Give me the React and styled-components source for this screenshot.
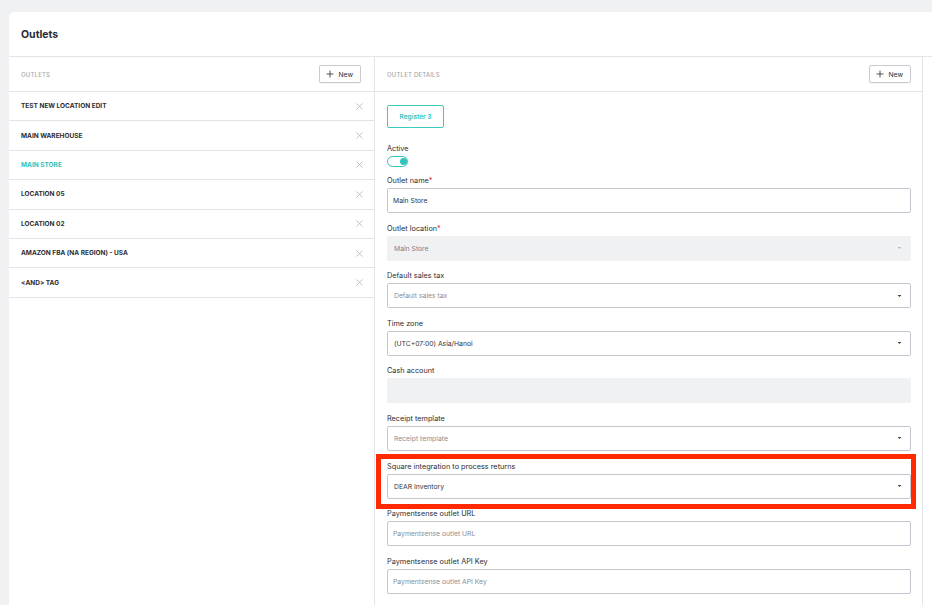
import React from "react";
import styled, { createGlobalStyle } from "styled-components";

const Global = createGlobalStyle`
  html, body { margin: 0; padding: 0; background: #f0f1f3; overflow: hidden; }
  body { font-family: "Inter", "Roboto", "Liberation Sans", sans-serif; color: #2b2d33; }
  * { box-sizing: border-box; }
`;

const Page = styled.div`
  padding: 12px 0 0 9px;
  width: 932px;
  height: 605px;
`;

const Card = styled.div`
  background: #fff;
  border-radius: 5px 0 0 0;
  width: 940px;
  height: 620px;
  display: flex;
  flex-direction: column;
`;

const CardHeader = styled.div`
  height: 45px;
  border-bottom: 1px solid #e3e4e8;
  display: flex;
  align-items: center;
  padding-left: 12px;
  font-size: 10.5px;
  font-weight: 700;
  color: #2b2d33;
`;

const Columns = styled.div`
  display: flex;
  flex: 1;
`;

const Column = styled.div`
  width: ${(p) => p.$w}px;
  border-right: 1px solid #e3e4e8;
  display: flex;
  flex-direction: column;
  position: relative;
`;

const ColHeader = styled.div`
  height: 35px;
  flex-shrink: 0;
  border-bottom: 1px solid #e3e4e8;
  display: flex;
  align-items: center;
  justify-content: space-between;
  padding: 0 ${(p) => p.$pr}px 0 12px;
`;

const ColTitle = styled.span`
  font-size: 6px;
  letter-spacing: 0.2px;
  text-transform: uppercase;
  color: #a5a8b0;
  font-weight: 500;
`;

const NewButton = styled.button`
  height: 18px;
  padding: 0 7px 0 6px;
  border: 1px solid #c9cbd2;
  border-radius: 2px;
  background: #fff;
  font-family: inherit;
  font-size: 6.8px;
  font-weight: 400;
  color: #2b2d33;
  display: flex;
  align-items: center;
  gap: 4px;
  box-shadow: 0 1px 0 rgba(0,0,0,0.04);
  svg { display: block; }
`;

const Row = styled.div`
  height: 29.4px;
  flex-shrink: 0;
  border-bottom: 1px solid #e3e4e8;
  display: flex;
  align-items: center;
  justify-content: space-between;
  padding: 0 11px 0 12px;
  font-size: 6.5px;
  font-weight: 700;
  text-transform: uppercase;
  color: ${(p) => (p.$active ? "#2ec3bb" : "#2b2d33")};
`;

const Form = styled.div`
  padding: 13px 11px 0 12px;
  display: flex;
  flex-direction: column;
`;

const RegisterButton = styled.button`
  align-self: flex-start;
  width: 57px;
  height: 23px;
  border: 1.3px solid #3ccbc2;
  border-radius: 2px;
  background: #fff;
  color: #2ec3bb;
  font-family: inherit;
  font-size: 6.5px;
  font-weight: 600;
  margin-bottom: 16px;
`;

const Field = styled.div`
  display: flex;
  flex-direction: column;
  margin-bottom: ${(p) => p.$mb ?? 10.6}px;
  position: relative;
`;

const Label = styled.div`
  font-size: 7.3px;
  color: #2b2d33;
  line-height: 9px;
  margin-bottom: 3px;
  span { color: #e5243b; }
`;

const Control = styled.div`
  height: 25px;
  border: 1px solid ${(p) => (p.$disabled ? "#f0f1f3" : "#c5c7d0")};
  background: ${(p) => (p.$disabled ? "#f0f1f3" : "#fff")};
  border-radius: 2px;
  display: flex;
  align-items: center;
  justify-content: space-between;
  padding: 0 8px 0 ${(p) => (p.$select ? 6 : 5)}px;
  font-size: 6.8px;
  color: ${(p) => (p.$placeholder ? "#8a8d96" : p.$disabled ? "#7d8089" : "#33353b")};
`;

const Toggle = styled.div`
  width: 21px;
  height: 11px;
  border: 1.4px solid #2ec3bb;
  border-radius: 6px;
  background: #fff;
  position: relative;
  &::after {
    content: "";
    position: absolute;
    right: 0.5px;
    top: 0.5px;
    width: 7px;
    height: 7px;
    border-radius: 50%;
    background: #2ec3bb;
  }
`;

const Highlight = styled.div`
  position: absolute;
  left: -11px;
  right: -5px;
  top: -8px;
  bottom: -10px;
  border: 5px solid #ff2a00;
  pointer-events: none;
`;

const XIcon = () => (
  <svg width="7" height="7" viewBox="0 0 7 7">
    <path d="M0.4 0.4 L6.6 6.6 M6.6 0.4 L0.4 6.6" stroke="#b3b6bd" strokeWidth="0.8" />
  </svg>
);

const Plus = () => (
  <svg width="8" height="8" viewBox="0 0 8 8">
    <path d="M4 0.5 V7.5 M0.5 4 H7.5" stroke="#2b2d33" strokeWidth="0.8" />
  </svg>
);

const Caret = ({ light }) => (
  <svg width="5" height="4" viewBox="0 0 5 4">
    <path d="M0.6 1 L2.5 3.1 L4.4 1 Z" fill={light ? "#b8bac1" : "#3a3c42"} />
  </svg>
);

const outlets = [
  "Test new location edit",
  "Main warehouse",
  "Main store",
  "Location 05",
  "Location 02",
  "Amazon FBA (NA region) - USA",
  "<AND> tag",
];

const fields = [
  { label: "Outlet name", req: true, value: "Main Store" },
  { label: "Outlet location", req: true, value: "Main Store", select: true, disabled: true },
  { label: "Default sales tax", value: "Default sales tax", select: true, placeholder: true },
  { label: "Time zone", value: "(UTC+07:00) Asia/Hanoi", select: true },
  { label: "Cash account", value: "", disabled: true },
  { label: "Receipt template", value: "Receipt template", select: true, placeholder: true },
  { label: "Square integration to process returns", value: "DEAR Inventory", select: true, highlight: true },
  { label: "Paymentsense outlet URL", value: "Paymentsense outlet URL", placeholder: true },
  { label: "Paymentsense outlet API Key", value: "Paymentsense outlet API Key", placeholder: true },
];

export default function App() {
  return (
    <>
      <Global />
      <Page>
        <Card>
          <CardHeader>Outlets</CardHeader>
          <Columns>
            <Column $w={366}>
              <ColHeader $pr={13}>
                <ColTitle>Outlets</ColTitle>
                <NewButton>
                  <Plus />
                  New
                </NewButton>
              </ColHeader>
              {outlets.map((o) => (
                <Row key={o} $active={o === "Main store"}>
                  <span>{o}</span>
                  <XIcon />
                </Row>
              ))}
            </Column>
            <Column $w={548}>
              <ColHeader $pr={11}>
                <ColTitle>Outlet details</ColTitle>
                <NewButton>
                  <Plus />
                  New
                </NewButton>
              </ColHeader>
              <Form>
                <RegisterButton>Register 3</RegisterButton>
                <Field $mb={9}>
                  <Label>Active</Label>
                  <Toggle />
                </Field>
                {fields.map((f) => (
                  <Field key={f.label}>
                    <Label>
                      {f.label}
                      {f.req && <span>*</span>}
                    </Label>
                    <Control $disabled={f.disabled} $placeholder={f.placeholder} $select={f.select}>
                      <span>{f.value}</span>
                      {f.select && <Caret light={f.disabled} />}
                    </Control>
                    {f.highlight && <Highlight />}
                  </Field>
                ))}
              </Form>
            </Column>
          </Columns>
        </Card>
      </Page>
    </>
  );
}
